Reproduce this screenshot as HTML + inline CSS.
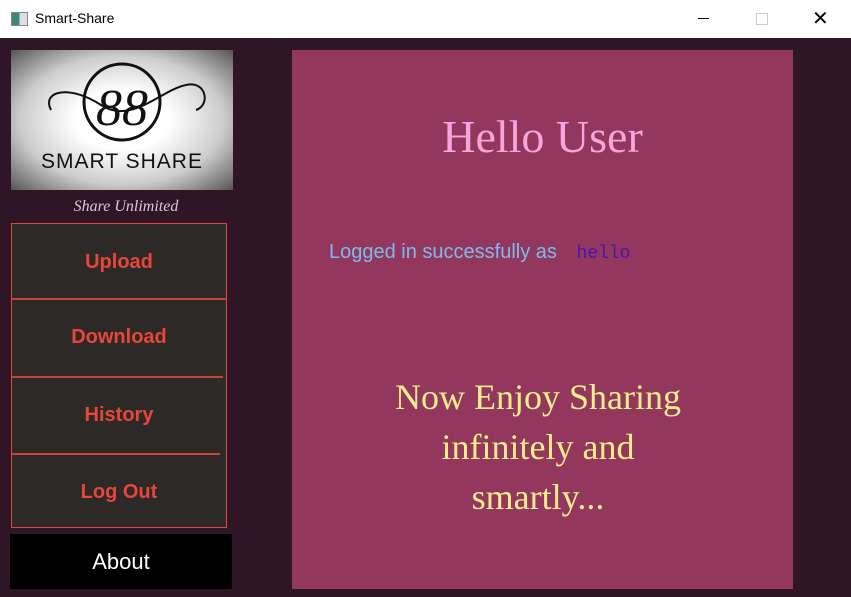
<!DOCTYPE html>
<html><head><style>
body{margin:0;width:851px;height:597px;overflow:hidden;background:#2e1627;font-family:"Liberation Sans",sans-serif;position:relative}
.tb{position:absolute;left:0;top:0;width:851px;height:38px;background:#fff}
.tb .t{position:absolute;left:35px;top:10px;font-size:14px;color:#000}
.ic{position:absolute;left:11px;top:12px;width:15px;height:12px;border:1px solid #888;background:linear-gradient(90deg,#3a8a7a 50%,#dde 50%)}
.logo{position:absolute;left:11px;top:50px;width:222px;height:140px;background:radial-gradient(ellipse at center,#fff 30%,#ccc 65%,#555 100%)}
.logo .s{position:absolute;left:0;width:222px;top:100px;text-align:center;font-size:21px;color:#111;letter-spacing:1px;font-family:"Liberation Sans",sans-serif}
.sub{position:absolute;left:11px;width:230px;top:198px;text-align:center;color:#d8c8e0;font-style:italic;font-family:"Liberation Serif",serif;font-size:16px}
.menu{position:absolute;left:11px;top:223px;width:214px;height:303px;border:1px solid #e8463a;background:#2d2927}
.b{position:absolute;left:0;width:214px;text-align:center;color:#e8463a;font-weight:bold;font-size:20px}
.l{position:absolute;left:0;height:2px;background:#c8433a}
.about{position:absolute;left:10px;top:534px;width:222px;height:55px;background:#000;color:#fff;text-align:center;line-height:55px;font-size:22px}
.main{position:absolute;left:292px;top:50px;width:501px;height:539px;background:#93375e}
.h{position:absolute;left:0;width:501px;top:60px;text-align:center;color:#f7a6dc;font-family:"Liberation Serif",serif;font-size:46px}
.lg{position:absolute;left:37px;top:191px;font-size:20px;color:#7dbbec}
.lg span{font-family:"Liberation Mono",monospace;color:#4a12b0;font-size:18px;margin-left:14px}
.en{position:absolute;left:0;width:492px;top:322px;text-align:center;color:#f6ee8a;font-family:"Liberation Serif",serif;font-size:36px;line-height:50px}
</style></head><body>
<div class="tb"><div class="ic"></div><div class="t">Smart-Share</div>
<div style="position:absolute;left:698px;top:18px;width:11px;height:1px;background:#000"></div>
<div style="position:absolute;left:756px;top:13px;width:10px;height:10px;border:1px solid #ccc"></div>
<div style="position:absolute;left:812px;top:6px;font-size:20px;color:#000">✕</div></div>
<div class="logo">
<svg width="222" height="100" style="position:absolute;left:0;top:0"><circle cx="111" cy="52" r="38" fill="none" stroke="#111" stroke-width="3"/><path d="M40 60 C30 40 60 35 90 55 C120 75 150 40 175 35 C195 30 200 55 185 60" fill="none" stroke="#111" stroke-width="2"/><text x="111" y="75" text-anchor="middle" font-family="Liberation Serif" font-style="italic" font-size="52" fill="#111">88</text></svg>
<div class="s">SMART SHARE</div></div>
<div class="sub">Share Unlimited</div>
<div class="menu">
<div class="b" style="top:27px">Upload</div>
<div class="l" style="top:74px;width:214px"></div>
<div class="b" style="top:102px">Download</div>
<div class="l" style="top:152px;width:211px"></div>
<div class="b" style="top:180px">History</div>
<div class="l" style="top:229px;width:208px"></div>
<div class="b" style="top:257px">Log Out</div>
</div>
<div class="about">About</div>
<div class="main">
<div class="h">Hello User</div>
<div class="lg">Logged in successfully as <span>hello</span></div>
<div class="en">Now Enjoy Sharing<br>infinitely and<br>smartly...</div>
</div>
</body></html>
